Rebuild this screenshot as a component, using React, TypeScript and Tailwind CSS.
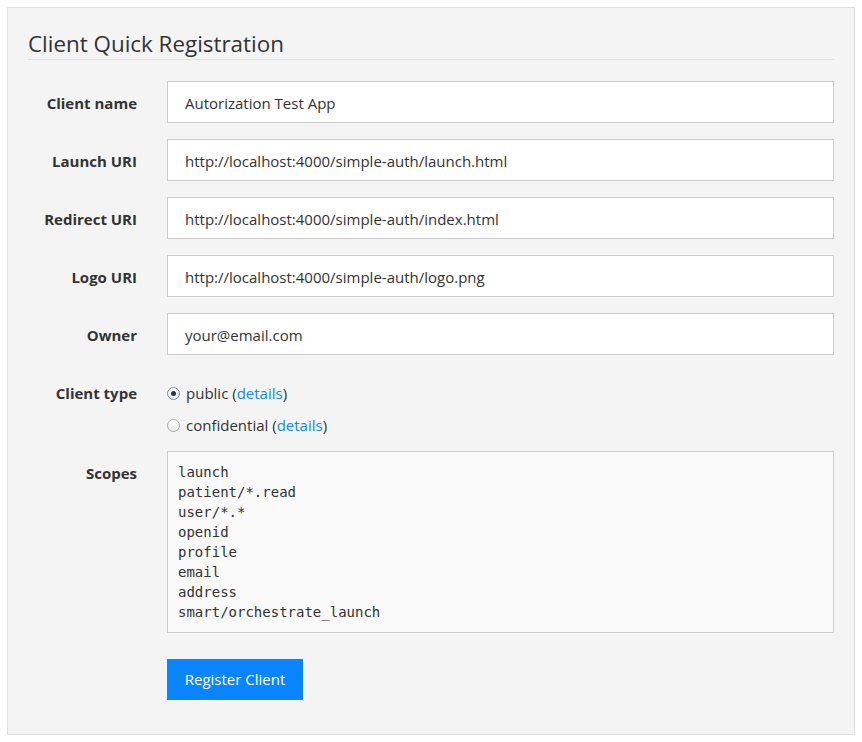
const fields = [
  { label: 'Client name', value: 'Autorization Test App' },
  { label: 'Launch URI', value: 'http://localhost:4000/simple-auth/launch.html' },
  { label: 'Redirect URI', value: 'http://localhost:4000/simple-auth/index.html' },
  { label: 'Logo URI', value: 'http://localhost:4000/simple-auth/logo.png' },
  { label: 'Owner', value: 'your@email.com' },
];

const scopes = [
  'launch',
  'patient/*.read',
  'user/*.*',
  'openid',
  'profile',
  'email',
  'address',
  'smart/orchestrate_launch',
];

const Radio = ({ checked, label }: { checked?: boolean; label: string }) => (
  <label className="flex items-center h-5">
    <span
      className={`flex items-center justify-center w-[13px] h-[13px] rounded-full border bg-gradient-to-b from-white to-[#ececec] ${
        checked ? 'border-[#6f8fb8]' : 'border-[#a8a8a8]'
      }`}
    >
      {checked && <span className="w-[5px] h-[5px] rounded-full bg-[#333]" />}
    </span>
    <span className="ml-[6px] text-[15px] text-[#333]">
      {label} (<a className="text-[#1486f0]">details</a>)
    </span>
  </label>
);

export default function App() {
  return (
    <div className="min-h-screen bg-white pt-[7px] pl-[7px] font-['Open_Sans',sans-serif]">
      <div className="w-[848px] h-[728px] bg-[#f4f4f4] border border-[#dedede] px-5 pt-[22px]">
        <h2 className="text-[22.4px] leading-[28px] text-[#333] pb-[1px] border-b border-[#e0e0e0]">
          Client Quick Registration
        </h2>

        <div className="mt-[21px] flex flex-col gap-4">
          {fields.map((f) => (
            <div key={f.label} className="flex items-center">
              <span className="w-[109px] pt-[2px] text-right text-[15px] font-bold text-[#333]">{f.label}</span>
              <div className="ml-[30px] flex-1 h-[42px] flex items-center bg-white border border-[#cccccc] pl-[17px] pt-[2px] text-[15px] text-[#333]">
                {f.value}
              </div>
            </div>
          ))}

          <div className="flex">
            <span className="w-[109px] h-5 leading-5 mt-[12px] text-right text-[15px] font-bold text-[#333]">
              Client type
            </span>
            <div className="ml-[30px] flex flex-col gap-3 pt-[12px]">
              <Radio checked label="public" />
              <Radio label="confidential" />
            </div>
          </div>

          <div className="flex">
            <span className="w-[109px] mt-[12px] leading-5 text-right text-[15px] font-bold text-[#333]">
              Scopes
            </span>
            <div className="ml-[30px] flex-1 h-[182px] bg-[#fafafa] border border-[#cccccc] pl-[10px] pt-[10px] font-['DejaVu_Sans_Mono',monospace] text-[14px] leading-5 text-[#333]">
              {scopes.map((s) => (
                <div key={s}>{s}</div>
              ))}
            </div>
          </div>

          <div className="flex mt-[10px]">
            <button className="ml-[139px] w-[136px] h-[41px] bg-[#0a84ff] text-white text-[15px]">
              Register Client
            </button>
          </div>
        </div>
      </div>
    </div>
  );
}
